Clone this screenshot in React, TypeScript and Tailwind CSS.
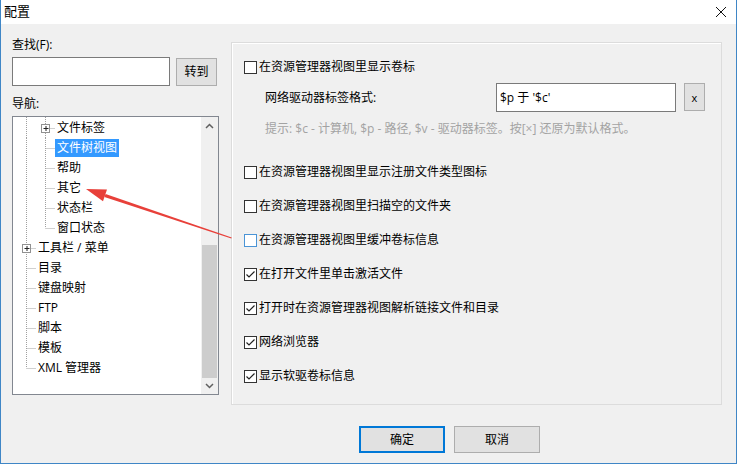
import React from 'react';

const font = { fontFamily: '"Open Sans","Noto Sans CJK SC",sans-serif' };

type Row = { t: string; lvl: 1 | 2; plus?: boolean; sel?: boolean; last?: boolean };

const rows: Row[] = [
  { t: '文件标签', lvl: 2, plus: true },
  { t: '文件树视图', lvl: 2, sel: true },
  { t: '帮助', lvl: 2 },
  { t: '其它', lvl: 2 },
  { t: '状态栏', lvl: 2 },
  { t: '窗口状态', lvl: 2, last: true },
  { t: '工具栏 / 菜单', lvl: 1, plus: true },
  { t: '目录', lvl: 1 },
  { t: '键盘映射', lvl: 1 },
  { t: 'FTP', lvl: 1 },
  { t: '脚本', lvl: 1 },
  { t: '模板', lvl: 1 },
  { t: 'XML 管理器', lvl: 1, last: true },
];

const TreeLines: React.FC<{ row: Row; first?: boolean }> = ({ row, first }) => {
  const x1 = 13.5;
  const x2 = 32.5;
  const dot = { stroke: '#a0a0a0', strokeDasharray: '1 1', strokeWidth: 1 };
  const lineX = row.lvl === 2 ? x2 : x1;
  const w = row.lvl === 2 ? 42 : 23;
  const top = first ? -1 : 0;
  return (
    <svg width={w} height={20} className="shrink-0 overflow-visible">
      {/* level 1 trunk */}
      <line x1={x1} y1={top} x2={x1} y2={row.lvl === 1 && row.last ? 10 : 20} {...dot} />
      {row.lvl === 2 && <line x1={x2} y1={top} x2={x2} y2={row.last ? 10 : 20} {...dot} />}
      <line x1={row.plus ? lineX + 5 : lineX} y1={10.5} x2={w} y2={10.5} {...dot} />
      {row.plus && (
        <g>
          <rect x={lineX - 4} y={6.5} width={8} height={8} fill="#fff" stroke="#919191" />
          <line x1={lineX - 2} y1={10.5} x2={lineX + 3} y2={10.5} stroke="#222" />
          <line x1={lineX + 0.5} y1={8} x2={lineX + 0.5} y2={13} stroke="#222" />
        </g>
      )}
    </svg>
  );
};

const Check: React.FC<{ checked?: boolean; hover?: boolean; label: string }> = ({ checked, hover, label }) => (
  <div className="flex h-5 items-center">
    <div
      className={`w-[13px] h-[13px] bg-white border flex items-center justify-center ${
        hover ? 'border-[#4a94d6]' : 'border-[#333]'
      }`}
    >
      {checked && (
        <svg width={11} height={11} viewBox="0 0 11 11">
          <path d="M1.5 5.5 L4 8 L9.5 2.5" fill="none" stroke="#222" strokeWidth={1.2} />
        </svg>
      )}
    </div>
    <span className="ml-[2px] text-[12px] text-[#000]">{label}</span>
  </div>
);

export default function App() {
  return (
    <div className="w-[741px] h-[469px] bg-white relative overflow-hidden" style={font}>
      <div className="w-[737px] h-[464px] border border-t-0 border-[#3f86c6] flex flex-col">
        {/* title bar */}
        <div className="h-6 bg-white flex items-center justify-between pl-[3px] pr-[9px]">
          <span className="text-[13px] text-black">配置</span>
          <svg width={12} height={12} viewBox="0 0 12 12">
            <path d="M1 1 L11 11 M11 1 L1 11" stroke="#111" strokeWidth={1} />
          </svg>
        </div>

        <div className="flex-1 bg-[#f0f0f0] flex flex-col">
          <div className="flex items-start pt-3 pl-[11px]">
            {/* left column */}
            <div className="w-[207px] flex flex-col">
              <div className="h-4 leading-4 pt-px text-[12px] text-black">查找(F):</div>
              <div className="flex items-start mt-[5px]">
                <div className="w-[158px] h-[29px] bg-white border border-[#7a7a7a]" />
                <button className="ml-[6px] mt-[1px] w-[41px] h-[28px] bg-[#e1e1e1] border border-[#adadad] text-[12px] text-black">
                  转到
                </button>
              </div>
              <div className="h-4 leading-4 pt-px mt-[9px] text-[12px] text-black">导航:</div>
              <div className="mt-[5px] h-[279px] bg-white border border-[#828790] flex">
                <div className="flex-1 flex flex-col pt-px">
                  {rows.map((r, i) => (
                    <div key={r.t} className="h-5 flex items-center">
                      <TreeLines row={r} first={i === 0} />
                      <span
                        className={`px-[2px] h-[18px] leading-[18px] text-[12px] whitespace-nowrap ${
                          r.sel ? 'bg-[#3399ff] text-white' : 'text-black'
                        }`}
                      >
                        {r.t}
                      </span>
                    </div>
                  ))}
                </div>
                <div className="w-[17px] bg-[#f0f0f0] flex flex-col items-center">
                  <div className="h-[17px] w-full flex items-center justify-center">
                    <svg width={9} height={6} viewBox="0 0 9 6">
                      <path d="M1 5 L4.5 1.5 L8 5" fill="none" stroke="#606060" strokeWidth={1.5} />
                    </svg>
                  </div>
                  <div className="h-[111px]" />
                  <div className="w-[15px] h-[133px] bg-[#cdcdcd]" />
                  <div className="flex-1 w-full flex items-center justify-center">
                    <svg width={9} height={6} viewBox="0 0 9 6">
                      <path d="M1 1 L4.5 4.5 L8 1" fill="none" stroke="#606060" strokeWidth={1.5} />
                    </svg>
                  </div>
                </div>
              </div>
            </div>

            {/* right group */}
            <div className="ml-3 mt-[6px] w-[491px] h-[363px] border border-[#dcdcdc] shadow-[inset_1px_1px_0_#fff] pl-3 pt-[14px] flex flex-col">
              <Check label="在资源管理器视图里显示卷标" />
              <div className="flex items-start mt-[6px]">
                <div className="ml-[21px] w-[231px] h-[29px] pt-px flex items-center text-[12px] text-black">
                  网络驱动器标签格式:
                </div>
                <div className="w-[180px] h-[29px] bg-white border border-[#7a7a7a] flex items-center pl-[3px] text-[12px] text-black">
                  $p 于 '$c'
                </div>
                <button className="ml-2 w-[21px] h-[28px] bg-[#e1e1e1] border border-[#adadad] text-[11px] text-black leading-none">
                  x
                </button>
              </div>
              <div className="ml-[21px] mt-2 h-4 leading-4 pt-px text-[12px] text-[#a3a3a3] whitespace-nowrap">
                提示: $c - 计算机, $p - 路径, $v - 驱动器标签。按[×] 还原为默认格式。
              </div>
              <div className="mt-[26px] flex flex-col gap-[14px]">
                <Check label="在资源管理器视图里显示注册文件类型图标" />
                <Check label="在资源管理器视图里扫描空的文件夹" />
                <Check hover label="在资源管理器视图里缓冲卷标信息" />
                <Check checked label="在打开文件里单击激活文件" />
                <Check checked label="打开时在资源管理器视图解析链接文件和目录" />
                <Check checked label="网络浏览器" />
                <Check checked label="显示软驱卷标信息" />
              </div>
            </div>
          </div>

          {/* buttons */}
          <div className="flex mt-[21px] pl-[358px] gap-[9px]">
            <button className="w-[86px] h-[27px] bg-[#e1e1e1] border-2 border-[#0078d7] text-[12px] text-black">
              确定
            </button>
            <button className="w-[86px] h-[27px] bg-[#e1e1e1] border border-[#adadad] text-[12px] text-black">
              取消
            </button>
          </div>
        </div>
      </div>

      {/* red annotation arrow */}
      <svg className="absolute left-0 top-0 pointer-events-none" width={741} height={469}>
        <polygon points="105.6,193.9 104.4,197.1 231.3,238.5 231.7,237.5" fill="#e8403a" />
        <polygon points="86,189 107,189.4 103,201.2" fill="#e8403a" />
      </svg>
    </div>
  );
}
